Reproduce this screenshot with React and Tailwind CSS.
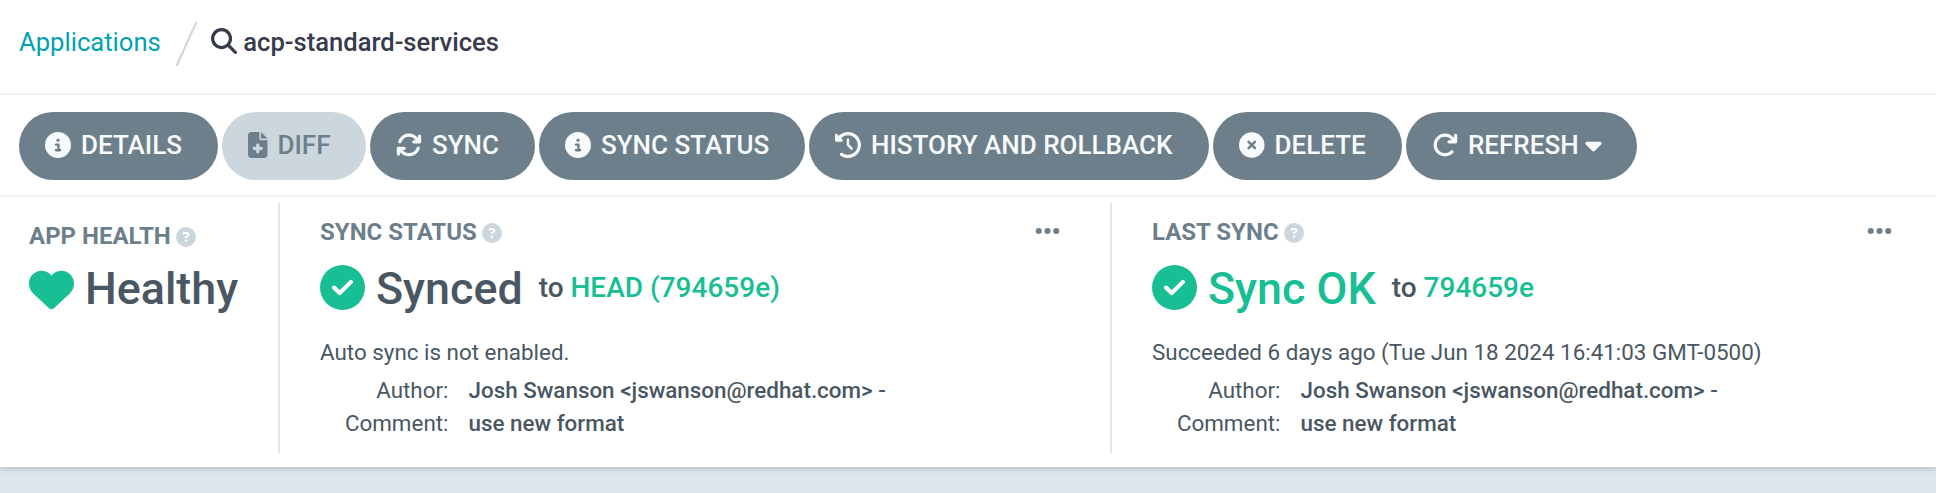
import {
  FaArrowRotateRight,
  FaArrowsRotate,
  FaCaretDown,
  FaCircleCheck,
  FaCircleInfo,
  FaCircleQuestion,
  FaCircleXmark,
  FaClockRotateLeft,
  FaEllipsis,
  FaFileMedical,
  FaHeart,
  FaMagnifyingGlass,
} from 'react-icons/fa6';

const ACTIONS = [
  { label: 'DETAILS', Icon: FaCircleInfo, width: 'w-[199px]' },
  { label: 'DIFF', Icon: FaFileMedical, width: 'w-[144px]', iconWidth: 'w-[19.5px]', disabled: true },
  { label: 'SYNC', Icon: FaArrowsRotate, width: 'w-[165px]' },
  { label: 'SYNC STATUS', Icon: FaCircleInfo, width: 'w-[266px]' },
  { label: 'HISTORY AND ROLLBACK', Icon: FaClockRotateLeft, width: 'w-[400px]' },
  { label: 'DELETE', Icon: FaCircleXmark, width: 'w-[189px]', iconWidth: 'w-[25.5px]' },
  { label: 'REFRESH', Icon: FaArrowRotateRight, width: 'w-[231px]', menu: true },
];

function ActionButton({ label, Icon, width, iconWidth = 'w-[26px]', disabled, menu }) {
  const tone = disabled ? 'bg-[#ccd6dd] text-[#6d7f8b]' : 'bg-[#6d7f8b] text-[#f8fbfb]';
  return (
    <button
      disabled={disabled}
      className={`${width} ${tone} flex h-[68px] shrink-0 items-center whitespace-nowrap rounded-full pl-[26px] pb-[3px] text-[26px] font-medium`}
    >
      <Icon className={`${iconWidth} mr-[10px] h-[26px] shrink-0`} />
      <span className="leading-8">{label}</span>
      {menu && <FaCaretDown className="ml-[6px] h-[26px] w-[17px] shrink-0" />}
    </button>
  );
}

function Heading({ children }) {
  return (
    <div className="flex h-[28px] items-center text-[24px] font-bold text-[#6d7f8b]">
      <span>{children}</span>
      <FaCircleQuestion className="ml-[5px] mt-px h-5 w-5 text-[#ccd6dd]" />
    </div>
  );
}

function Commit() {
  return (
    <dl className="mt-[5px] grid grid-cols-[128.5px_auto] gap-x-[20px] text-[22.4px] leading-[33px]">
      <dt className="text-right">Author:</dt>
      <dd className="font-medium">Josh Swanson &lt;jswanson@redhat.com&gt; -</dd>
      <dt className="text-right">Comment:</dt>
      <dd className="font-medium">use new format</dd>
    </dl>
  );
}

function SyncPanel({ title, status, statusClass, revision, message }) {
  return (
    <>
      <div className="flex items-start justify-between">
        <Heading>{title}</Heading>
        <FaEllipsis className="-mt-px h-[28px] w-[25px] text-[#6d7f8b]" />
      </div>
      <div className="mt-[14px] flex h-[56px] items-center">
        <FaCircleCheck className="mb-[2px] h-[45px] w-[45px] text-[#18be94]" />
        <span className={`ml-[11px] mt-[2px] text-[44.8px] font-medium ${statusClass}`}>{status}</span>
        <span className="ml-[16px] text-[28px] font-medium">
          to <a className="text-[#18be94]">{revision}</a>
        </span>
      </div>
      <p className="mt-[19px] text-[22.4px] leading-[34px]">{message}</p>
      <Commit />
    </>
  );
}

export default function App() {
  return (
    <div className="h-[493px] w-[1936px] overflow-hidden bg-[#dee6eb] font-['Roboto',sans-serif] text-[#495763]">
      <main className="h-[467px] w-[1936px] bg-white shadow-[0_1px_5px_1px_rgba(130,145,145,0.4)]">
        <nav className="flex h-[95px] items-start border-b-2 border-[#eef3f7] pl-[19px] text-[25.6px] leading-[32px]">
          <a className="mt-[26px] text-[#00a2b3]">Applications</a>
          <svg className="ml-[14px] mt-[21px] h-[46px] w-[23px]" viewBox="0 0 23 46" fill="none">
            <path d="M1.5 45 21.5 1" stroke="#ccd6dd" strokeWidth="2" />
          </svg>
          <FaMagnifyingGlass className="ml-[13px] mt-[28px] h-[26px] w-[26px] text-[#363c4a]" />
          <span className="ml-[6.5px] mt-[26px] font-medium text-[#363c4a]">acp-standard-services</span>
        </nav>
        <div className="flex h-[102px] items-start gap-1 border-b-2 border-[#eef3f7] pl-[19px] pt-[17px]">
          {ACTIONS.map((action) => (
            <ActionButton key={action.label} {...action} />
          ))}
        </div>
        <div className="flex h-[256px] pt-[6px]">
          <section className="w-[280px] shrink-0 border-r-2 border-[#dee6eb] pl-[29px] pt-[19px]">
            <Heading>APP HEALTH</Heading>
            <div className="mt-[11px] flex h-[56px] items-center">
              <FaHeart className="h-[45px] w-[45px] text-[#18be94]" />
              <span className="ml-[11px] text-[44.8px] font-medium">Healthy</span>
            </div>
          </section>
          <section className="w-[832px] shrink-0 border-r-2 border-[#dee6eb] pl-[40px] pr-[50px] pt-[15px]">
            <SyncPanel
              title="SYNC STATUS"
              status="Synced"
              statusClass="text-[#495763]"
              revision="HEAD (794659e)"
              message="Auto sync is not enabled."
            />
          </section>
          <section className="grow pl-[40px] pr-[44px] pt-[15px]">
            <SyncPanel
              title="LAST SYNC"
              status="Sync OK"
              statusClass="text-[#18be94]"
              revision="794659e"
              message="Succeeded 6 days ago (Tue Jun 18 2024 16:41:03 GMT-0500)"
            />
          </section>
        </div>
      </main>
    </div>
  );
}
